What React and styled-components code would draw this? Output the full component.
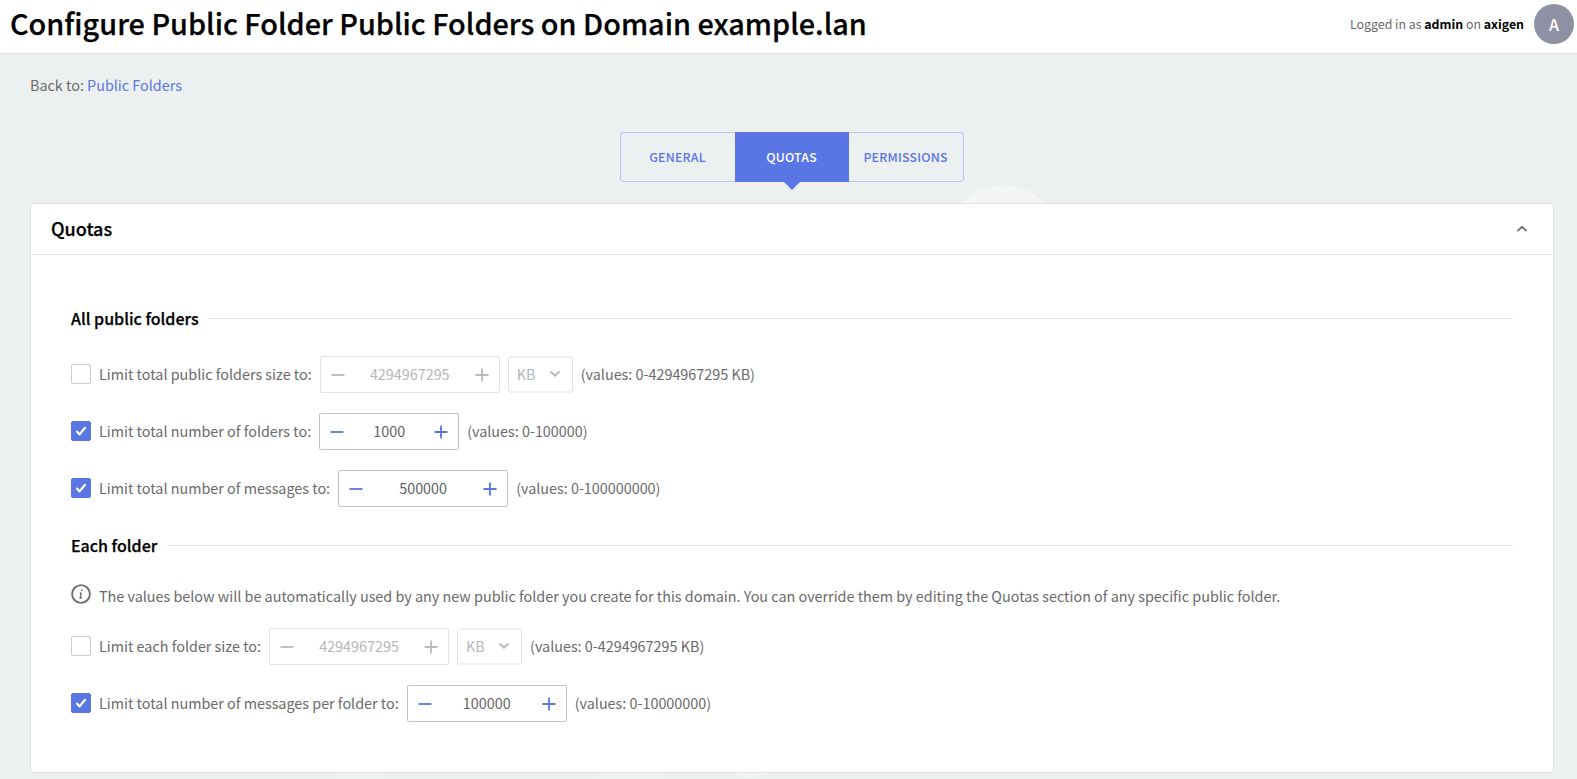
import React from "react";
import styled, { createGlobalStyle } from "styled-components";

const Global = createGlobalStyle`
  html, body { margin: 0; padding: 0; background: #edf0f1; }
  body { font-family: "Noto Sans CJK SC", "Noto Sans", sans-serif; color: #6a6a6a; font-size: 14.37px; overflow: hidden; }
  * { box-sizing: border-box; }
`;
const Page = styled.div`position: relative; height: 779px; overflow: hidden; background: #edf0f1;`;
const Decor = styled.div`
  position: absolute; border-radius: 50%; background: ${p => (p.$faint ? "#eff2f3" : "#f3f5f6")};
  left: ${p => p.$x - p.$r}px; top: ${p => p.$y - p.$r}px; width: ${p => p.$r * 2}px; height: ${p => p.$r * 2}px;
`;
const Header = styled.header`
  position: relative; height: 54px; background: #fff; border-bottom: 1px solid #e0e3e6;
  display: flex; align-items: center; justify-content: space-between; padding: 0 3px 5px 10px;
`;
const Title = styled.h1`margin: 0; padding-bottom: 3px; font-size: 28.83px; line-height: 44px; font-weight: 500; color: #000; -webkit-text-stroke: 0.25px #000;`;
const UserBox = styled.div`display: flex; align-items: center; gap: 10px; font-size: 12.36px; color: #6a6a6a;`;
const Strong = styled.b`color: #000; font-weight: 600;`;
const Avatar = styled.div`
  width: 40px; height: 40px; border-radius: 50%; background: #8e91a3; color: #fff;
  display: flex; align-items: center; justify-content: center; font-size: 16px; font-weight: 500; line-height: 1;
`;
const Main = styled.main`position: relative; padding: 0 23px 0 30px;`;
const BackRow = styled.div`height: 24px; margin-top: 20px; line-height: 22px;`;
const Link = styled.a`color: #5a76e4; text-decoration: none;`;
const Tabs = styled.nav`
  margin: 34px auto 0; width: 344px; height: 50px; display: flex;
  border: 1px solid #b6c5f1; border-radius: 3px; background: transparent;
`;
const Tab = styled.div`
  position: relative; width: ${p => p.$w}px; margin: -1px 0; display: flex; align-items: center; justify-content: center;
  font-size: 12.35px; font-weight: 500; letter-spacing: 0.2px; line-height: 1; padding-right: 1px;
  color: ${p => (p.$active ? "#fff" : "#5a76e4")};
  background: ${p => (p.$active ? "#5a76e4" : "transparent")};
  ${p => p.$active && `
    &::after {
      content: ""; position: absolute; left: 50%; bottom: -8px; margin-left: -8px;
      border-left: 8px solid transparent; border-right: 8px solid transparent; border-top: 8px solid #5a76e4;
    }
  `}
`;
const Card = styled.section`
  position: relative; margin-top: 21px; background: #fff; border: 1px solid #e0e3e6; border-radius: 3px; height: 570px;
`;
const CardHead = styled.div`
  height: 51px; border-bottom: 1px solid #e0e3e6; padding: 0 25px 0 20px;
  display: flex; align-items: center; justify-content: space-between;
`;
const CardTitle = styled.h2`margin: 0; padding-bottom: 2px; font-size: 18px; line-height: 24px; font-weight: 500; color: #000; -webkit-text-stroke: 0.25px #000;`;
const CardBody = styled.div`padding: 51px 40px 0;`;
const SectionHead = styled.div`
  display: flex; align-items: center; gap: 10px; height: 24px;
  margin-top: ${p => p.$mt || 0}px; margin-bottom: ${p => p.$mb}px;
`;
const SectionTitle = styled.h3`margin: 0; font-size: 16px; line-height: 24px; font-weight: 500; color: #000; -webkit-text-stroke: 0.25px #000;`;
const Rule = styled.div`flex: 1; height: 1px; background: #e0e3e6;`;
const Row = styled.div`display: flex; align-items: center; height: 37px; margin-bottom: 20px;`;
const Check = styled.span`
  width: 20px; height: 20px; flex: none; border-radius: 2px; margin: 0 8px 2px 0; display: flex; align-items: center; justify-content: center;
  background: ${p => (p.$on ? "#5a76e4" : "#fff")};
  border: 1px solid ${p => (p.$on ? "#5a76e4" : "#c9cbce")};
`;
const Label = styled.span`line-height: 24px; padding-bottom: 2px; margin-right: 8px; white-space: nowrap;`;
const Stepper = styled.div`
  width: ${p => p.$w}px; height: 37px; flex: none; display: flex; align-items: center; justify-content: space-between; padding: 0 10px;
  border: 1px solid ${p => (p.$off ? "#e0e2e5" : "#c3c5c8")}; border-radius: 2px; background: #fff; margin-right: 8px;
  color: ${p => (p.$off ? "#b5b6b8" : "#5f5f5f")}; font-size: 14.37px;
`;
const StepValue = styled.span`padding-bottom: 2px;`;
const StepIcon = styled.svg`width: 14px; height: 14px; stroke: ${p => (p.$off ? "#b9babc" : "#5a76e4")}; stroke-width: 1.8; fill: none;`;
const Select = styled.div`
  width: 65px; height: 36px; flex: none; display: flex; align-items: center; justify-content: space-between; padding: 0 11px 2px 8px;
  border: 1px solid #e0e2e5; border-radius: 2px; color: #b5b6b8; margin-right: 8px; background: #fff; transform: translateY(-0.5px);
`;
const Hint = styled.span`line-height: 24px; padding-bottom: 2px; white-space: nowrap;`;
const Info = styled.div`display: flex; align-items: center; height: 24px; margin-bottom: 21px;`;
const InfoSvg = styled.svg`width: 20px; height: 20px; margin-right: 8px; flex: none; transform: translateY(-1px);`;

const Minus = ({ off }) => <StepIcon $off={off} viewBox="0 0 14 14"><path d="M0.5 7H13.5" /></StepIcon>;
const Plus = ({ off }) => <StepIcon $off={off} viewBox="0 0 14 14"><path d="M0.5 7H13.5M7 0.5V13.5" /></StepIcon>;
const Tick = () => (
  <svg width="12" height="12" viewBox="0 0 12 12" fill="none" stroke="#fff" strokeWidth="2.2" strokeLinecap="round" strokeLinejoin="round">
    <path d="M2 6.6L4.6 9.4L10 2.8" />
  </svg>
);
const Chevron = ({ color, size = 12, w = 1.8, up }) => (
  <svg width={size} height={size} viewBox="0 0 12 12" fill="none" stroke={color} strokeWidth={w}>
    <path d={up ? "M1.5 8L6 3.8L10.5 8" : "M1.5 4L6 8.2L10.5 4"} />
  </svg>
);

const LimitRow = ({ label, value, width, hint, on, unit }) => (
  <Row>
    <Check $on={on}>{on && <Tick />}</Check>
    <Label>{label}</Label>
    <Stepper $w={width} $off={!on}>
      <Minus off={!on} />
      <StepValue>{value}</StepValue>
      <Plus off={!on} />
    </Stepper>
    {unit && <Select>{unit}<Chevron color="#b5b6b8" /></Select>}
    <Hint>{hint}</Hint>
  </Row>
);

export default function App() {
  return (
    <Page>
      <Global />
      <Decor $x={1003} $y={243} $r={58} />
      <Decor $x={750} $y={744} $r={33} />
      <Decor $faint $x={358} $y={800} $r={34} />
      <Decor $faint $x={630} $y={815} $r={52} />
      <Header>
        <Title>Configure Public Folder Public Folders on Domain example.lan</Title>
        <UserBox>
          <span>Logged in as <Strong>admin</Strong> on <Strong>axigen</Strong></span>
          <Avatar>A</Avatar>
        </UserBox>
      </Header>
      <Main>
        <BackRow>Back to: <Link>Public Folders</Link></BackRow>
        <Tabs>
          <Tab $w={114}>GENERAL</Tab>
          <Tab $w={114} $active>QUOTAS</Tab>
          <Tab $w={114}>PERMISSIONS</Tab>
        </Tabs>
        <Card>
          <CardHead>
            <CardTitle>Quotas</CardTitle>
            <Chevron color="#6e7378" up />
          </CardHead>
          <CardBody>
            <SectionHead $mb={26}>
              <SectionTitle>All public folders</SectionTitle>
              <Rule />
            </SectionHead>
            <LimitRow label="Limit total public folders size to:" value="4294967295" width={180} unit="KB" hint="(values: 0-4294967295 KB)" />
            <LimitRow on label="Limit total number of folders to:" value="1000" width={140} hint="(values: 0-100000)" />
            <LimitRow on label="Limit total number of messages to:" value="500000" width={170} hint="(values: 0-100000000)" />
            <SectionHead $mt={26} $mb={26}>
              <SectionTitle>Each folder</SectionTitle>
              <Rule />
            </SectionHead>
            <Info>
              <InfoSvg viewBox="0 0 20 20" fill="none" stroke="#6a6f73">
                <circle cx="10" cy="10" r="8.9" strokeWidth="1.9" />
                <path d="M10.7 5.6V7M10.3 9L8.8 9.2M10.2 9L9.2 14H10.9" strokeWidth="1.4" />
              </InfoSvg>
              The values below will be automatically used by any new public folder you create for this domain. You can override them by editing the Quotas section of any specific public folder.
            </Info>
            <LimitRow label="Limit each folder size to:" value="4294967295" width={180} unit="KB" hint="(values: 0-4294967295 KB)" />
            <LimitRow on label="Limit total number of messages per folder to:" value="100000" width={160} hint="(values: 0-10000000)" />
          </CardBody>
        </Card>
      </Main>
    </Page>
  );
}
